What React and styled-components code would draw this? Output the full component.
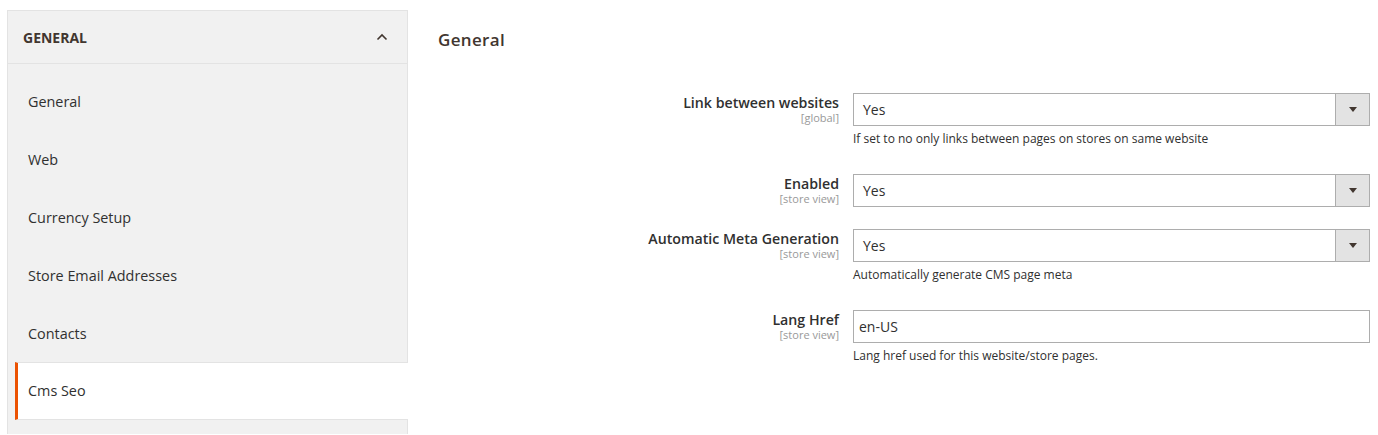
import React from "react";
import styled, { createGlobalStyle } from "styled-components";

const Global = createGlobalStyle`
  html, body { margin: 0; padding: 0; background: #fff; }
  body { font-family: "Open Sans", "Liberation Sans", sans-serif; color: #303030; }
  * { box-sizing: border-box; }
`;

const Page = styled.div`
  display: flex;
  align-items: flex-start;
  padding: 10px 8px 0 7px;
`;

const Sidebar = styled.aside`
  width: 401px;
  flex: none;
  background: #f1f1f1;
  border: 1px solid #e3e3e3;
  border-bottom: none;
  padding-bottom: 14px;
`;

const NavTitle = styled.div`
  height: 53px;
  display: flex;
  align-items: center;
  justify-content: space-between;
  padding: 0 19px 0 15px;
  border-bottom: 1px solid #e3e3e3;
  font-size: 14px;
  font-weight: 700;
  text-transform: uppercase;
  color: #41362f;
`;

const Chevron = styled.svg`
  width: 12px;
  height: 8px;
  display: block;
  margin-top: -1px;
`;

const NavList = styled.ul`
  list-style: none;
  margin: 0;
  padding: 9px 0 0;
`;

const NavItem = styled.li`
  height: 57.8px;
  margin-left: 7px;
  margin-right: ${(p) => (p.$active ? "-1px" : "0")};
  display: flex;
  align-items: center;
  padding-left: 10px;
  border-left: 3px solid ${(p) => (p.$active ? "#eb5202" : "transparent")};
  border-top: 1px solid ${(p) => (p.$active ? "#e3e3e3" : "transparent")};
  border-bottom: 1px solid ${(p) => (p.$active ? "#e3e3e3" : "transparent")};
  background: ${(p) => (p.$active ? "#fff" : "transparent")};
  font-size: 14.4px;
  color: #303030;
`;

const Main = styled.main`
  flex: 1;
  margin-left: 30px;
`;

const Heading = styled.h2`
  margin: 0;
  padding-top: 20px;
  line-height: 20px;
  font-size: 17px;
  font-weight: 600;
  letter-spacing: 0.02em;
  color: #41362f;
`;

const Fields = styled.div`
  margin-top: 43px;
  display: flex;
  flex-direction: column;
  gap: 22px;
`;

const Row = styled.div`
  display: grid;
  grid-template-columns: 401px 1fr;
  column-gap: 14px;
`;

const LabelCell = styled.div`
  text-align: right;
  padding-top: 1px;
`;

const LabelText = styled.div`
  font-size: 14.2px;
  font-weight: 600;
  line-height: 17px;
  color: #303030;
`;

const Scope = styled.div`
  font-size: 11px;
  line-height: 14px;
  color: #999;
`;

const Control = styled.div`
  display: flex;
  flex-direction: column;
`;

const SelectBox = styled.div`
  height: 33px;
  border: 1px solid #adadad;
  background: #fff;
  display: flex;
  align-items: stretch;
`;

const SelectValue = styled.div`
  flex: 1;
  display: flex;
  align-items: center;
  padding-left: 9px;
  font-size: 14px;
  color: #303030;
`;

const ArrowBtn = styled.div`
  width: 34px;
  background: #e3e3e3;
  border-left: 1px solid #adadad;
  display: flex;
  align-items: center;
  justify-content: center;
  &::after {
    content: "";
    width: 0;
    height: 0;
    border-left: 4px solid transparent;
    border-right: 4px solid transparent;
    border-top: 5px solid #41362f;
  }
`;

const TextInput = styled.div`
  height: 33px;
  border: 1px solid #adadad;
  background: #fff;
  display: flex;
  align-items: center;
  padding-left: 5px;
  font-size: 14px;
  color: #303030;
`;

const Note = styled.div`
  padding: 3px 0 3px;
  line-height: 20px;
  font-size: 12px;
  color: #303030;
`;

const navItems = [
  "General",
  "Web",
  "Currency Setup",
  "Store Email Addresses",
  "Contacts",
  "Cms Seo",
];

const fields = [
  { label: "Link between websites", scope: "[global]", type: "select", value: "Yes", note: "If set to no only links between pages on stores on same website" },
  { label: "Enabled", scope: "[store view]", type: "select", value: "Yes" },
  { label: "Automatic Meta Generation", scope: "[store view]", type: "select", value: "Yes", note: "Automatically generate CMS page meta" },
  { label: "Lang Href", scope: "[store view]", type: "text", value: "en-US", note: "Lang href used for this website/store pages." },
];

export default function App() {
  return (
    <>
      <Global />
      <Page>
        <Sidebar>
          <NavTitle>
            <span>General</span>
            <Chevron viewBox="0 0 12 8">
              <path d="M1.5 6.5 L6 2 L10.5 6.5" fill="none" stroke="#41362f" strokeWidth="1.6" />
            </Chevron>
          </NavTitle>
          <NavList>
            {navItems.map((n) => (
              <NavItem key={n} $active={n === "Cms Seo"}>{n}</NavItem>
            ))}
          </NavList>
        </Sidebar>
        <Main>
          <Heading>General</Heading>
          <Fields>
            {fields.map((f) => (
              <Row key={f.label}>
                <LabelCell>
                  <LabelText>{f.label}</LabelText>
                  <Scope>{f.scope}</Scope>
                </LabelCell>
                <Control>
                  {f.type === "select" ? (
                    <SelectBox>
                      <SelectValue>{f.value}</SelectValue>
                      <ArrowBtn />
                    </SelectBox>
                  ) : (
                    <TextInput>{f.value}</TextInput>
                  )}
                  {f.note && <Note>{f.note}</Note>}
                </Control>
              </Row>
            ))}
          </Fields>
        </Main>
      </Page>
    </>
  );
}
